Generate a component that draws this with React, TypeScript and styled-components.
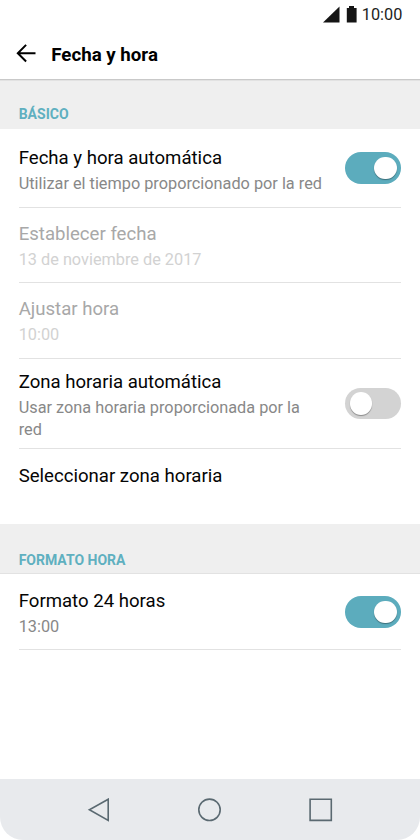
import React from "react";
import styled, { createGlobalStyle } from "styled-components";

const GlobalStyle = createGlobalStyle`
  *, *::before, *::after { box-sizing: border-box; }
  body { margin: 0; background: #fff; font-family: Roboto, "Liberation Sans", sans-serif; }
`;

const Screen = styled.div`
  display: flex;
  flex-direction: column;
  width: 420px;
  height: 840px;
  overflow: hidden;
  background: #fff;
`;

const StatusBar = styled.div`
  display: flex;
  flex: none;
  align-items: center;
  justify-content: flex-end;
  height: 29px;
  padding-right: 17.7px;
`;

const Clock = styled.span`
  margin-left: 2.4px;
  padding-top: 1px;
  font-size: 16.3px;
  line-height: 28px;
  color: #1d1d1d;
`;

const AppBar = styled.header`
  display: flex;
  flex: none;
  align-items: center;
  height: 50px;
  padding-left: 16px;
  gap: 15.3px;
`;

const BackButton = styled.button`
  display: flex;
  padding: 0;
  border: 0;
  background: none;
`;

const PageTitle = styled.h1`
  margin: 0;
  padding-top: 2px;
  font-size: 18.7px;
  font-weight: 700;
  line-height: 24px;
  color: #000;
`;

const SectionHeader = styled.h2<{ $first?: boolean }>`
  flex: none;
  height: 50px;
  margin: 0;
  padding: ${(p) => (p.$first ? 25 : 26)}px 18.7px 0;
  border-bottom: ${(p) => (p.$first ? "0" : "1px solid #e2e2e2")};
  background: #efefef;
  box-shadow: ${(p) => (p.$first ? "inset 0 1px 0 #c9c9c9, inset 0 2px 0 #e2e2e2" : "none")};
  font-size: 14px;
  font-weight: 700;
  line-height: 20px;
  color: #5fb0c0;
`;

const Row = styled.div<{ $height: number; $top: number; $last?: boolean }>`
  display: flex;
  flex: none;
  justify-content: space-between;
  height: ${(p) => p.$height}px;
  margin: 0 18.7px;
  padding-top: ${(p) => p.$top}px;
  border-bottom: ${(p) => (p.$last ? "0" : "1px solid #e2e2e2")};
`;

const RowText = styled.div`
  width: 306px;
`;

const RowTitle = styled.div<{ $disabled?: boolean }>`
  font-size: 18.6px;
  line-height: 24px;
  color: ${(p) => (p.$disabled ? "#a8a8a8" : "#050505")};
`;

const RowDetail = styled.div<{ $disabled?: boolean }>`
  margin-top: 3px;
  font-size: 16.3px;
  line-height: 22px;
  color: ${(p) => (p.$disabled ? "#d2d2d2" : "#888")};
`;

const Switch = styled.button<{ $on: boolean; $lift: number }>`
  display: flex;
  flex: none;
  align-items: center;
  justify-content: ${(p) => (p.$on ? "flex-end" : "flex-start")};
  align-self: flex-start;
  width: 56px;
  height: 31.5px;
  margin-top: ${(p) => p.$lift}px;
  padding: 0 4.5px;
  border: 0;
  border-radius: 16px;
  background: ${(p) => (p.$on ? "#5cacbd" : "#d3d3d3")};
`;

const Knob = styled.span`
  width: 22.5px;
  height: 22.5px;
  border-radius: 50%;
  background: #fff;
  box-shadow: 0 1px 1px rgba(0, 0, 0, 0.35);
`;

const Spacer = styled.div`
  flex: 1;
`;

const NavBar = styled.nav`
  display: flex;
  flex: none;
  align-items: center;
  justify-content: center;
  gap: 87px;
  height: 61px;
  border-radius: 0 0 23px 23px;
  background: #e8eaed;
`;

const NavIcon = styled.svg`
  display: block;
  fill: none;
  stroke: #5a6971;
  stroke-width: 1.6;
`;

type SettingProps = {
  title: string;
  detail?: string;
  height: number;
  top: number;
  disabled?: boolean;
  last?: boolean;
  on?: boolean;
  lift?: number;
};

function Setting({ title, detail, height, top, disabled, last, on, lift = 7 }: SettingProps) {
  return (
    <Row $height={height} $top={top} $last={last}>
      <RowText>
        <RowTitle $disabled={disabled}>{title}</RowTitle>
        {detail && <RowDetail $disabled={disabled}>{detail}</RowDetail>}
      </RowText>
      {on !== undefined && (
        <Switch $on={on} $lift={lift} role="switch" aria-checked={on} aria-label={title}>
          <Knob />
        </Switch>
      )}
    </Row>
  );
}

export default function App() {
  return (
    <>
      <GlobalStyle />
      <Screen>
        <StatusBar>
          <svg width="36" height="18" viewBox="0 0 36 18" fill="#151515">
            <path d="M0 16.6 16.5 0.4V16.6Z" />
            <path d="M23.8 2h2.2V0.1h5v1.9h2.6V16.6H23.8Z" />
          </svg>
          <Clock>10:00</Clock>
        </StatusBar>
        <AppBar>
          <BackButton aria-label="Atrás">
            <svg width="20" height="20" viewBox="0 0.8 20 20" fill="none" stroke="#000" strokeWidth="2">
              <path d="M19.5 10H2M10.1 1.7 1.8 10l8.3 8.3" />
            </svg>
          </BackButton>
          <PageTitle>Fecha y hora</PageTitle>
        </AppBar>
        <SectionHeader $first>BÁSICO</SectionHeader>
        <Setting title="Fecha y hora automática" detail="Utilizar el tiempo proporcionado por la red" height={79} top={16.5} lift={6.9} on />
        <Setting title="Establecer fecha" detail="13 de noviembre de 2017" height={75} top={14} disabled />
        <Setting title="Ajustar hora" detail="10:00" height={76} top={14} disabled />
        <Setting title="Zona horaria automática" detail="Usar zona horaria proporcionada por la red" height={90} top={10.5} on={false} lift={18.2} />
        <Setting title="Seleccionar zona horaria" height={75} top={14.5} last />
        <SectionHeader>FORMATO HORA</SectionHeader>
        <Setting title="Formato 24 horas" detail="13:00" height={76} top={15} lift={7.2} on />
        <Spacer />
        <NavBar>
          <NavIcon width="24" height="24" viewBox="0 0 24 24">
            <path d="M21.2 1.2v21.2L2.4 11.8Z" />
          </NavIcon>
          <NavIcon width="24" height="24" viewBox="0 0 24 24">
            <circle cx="11.5" cy="11.8" r="10.7" />
          </NavIcon>
          <NavIcon width="24" height="24" viewBox="0 0 24 24">
            <path d="M1.1 1.2h21.2v21.2H1.1Z" />
          </NavIcon>
        </NavBar>
      </Screen>
    </>
  );
}
